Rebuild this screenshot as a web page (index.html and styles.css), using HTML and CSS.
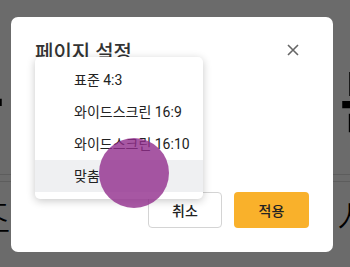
FILE: index.html
```html
<!DOCTYPE html>
<html lang="ko">

<head>
    <meta charset="UTF-8">
    <meta name="viewport" content="width=device-width, initial-scale=1.0">
    <title>페이지 설정</title>
    <link rel="stylesheet" href="styles.css">
</head>

<body>

    <div class="page">
        <div class="hero">
            <span class="hero-left">등</span>
            <span class="hero-right">문</span>
        </div>
        <div class="rule"></div>
        <div class="rule"></div>
        <div class="sub">
            <span class="sub-left">조</span>
            <span class="sub-right">사</span>
        </div>
    </div>

    <div class="overlay">
        <div class="modal">
            <div class="modal-header">
                <h2>페이지 설정</h2>
                <button class="close-btn" aria-label="닫기">
                    <svg width="12" height="12" viewBox="0 0 12 12">
                        <path d="M1 1 L11 11 M11 1 L1 11" stroke="#666" stroke-width="1.6" fill="none" />
                    </svg>
                </button>
            </div>

            <ul class="size-menu">
                <li>표준 4:3</li>
                <li>와이드스크린 16:9</li>
                <li>와이드스크린 16:10</li>
                <li class="active">맞춤</li>
            </ul>

            <div class="modal-footer">
                <button class="cancel-btn">취소</button>
                <button class="apply-btn">적용</button>
            </div>
        </div>
    </div>

    <div class="touch-dot"></div>

</body>

</html>
```

FILE: styles.css
```css
* {
    margin: 0;
    padding: 0;
    box-sizing: border-box;
}

body {
    font-family: Roboto, "Noto Sans CJK KR", sans-serif;
    width: 350px;
    height: 267px;
    overflow: hidden;
    background-color: #fff;
    color: #222;
}

/* page behind the dialog */
.page {
    padding-top: 64px;
    color: #000;
}

.hero {
    display: flex;
    justify-content: space-between;
    font-size: 68px;
    font-weight: 700;
    line-height: 80px;
    height: 104px;
}

.hero-left {
    margin-left: -58px;
}

.hero-right {
    margin-right: -52px;
}

.rule {
    height: 1px;
    background-color: #ddd;
    margin-top: 6px;
}

.sub {
    display: flex;
    justify-content: space-between;
    font-size: 40px;
    font-weight: 300;
    line-height: 48px;
    margin-top: 14px;
}

.sub-left {
    margin-left: -26px;
}

.sub-right {
    margin-right: -24px;
}

/* dialog */
.overlay {
    position: fixed;
    inset: 0;
    background-color: rgba(0, 0, 0, 0.58);
    padding: 17px 0 0 11px;
}

.modal {
    position: relative;
    width: 322px;
    height: 235px;
    background-color: #fff;
    border-radius: 7px;
    padding: 24px;
    display: flex;
    flex-direction: column;
}

.modal-header {
    display: flex;
    justify-content: space-between;
    align-items: flex-start;
}

.modal-header h2 {
    font-size: 20px;
    font-weight: 500;
    line-height: 24px;
    color: #333;
}

.close-btn {
    width: 24px;
    height: 24px;
    margin: -3px 4px 0 0;
    border: none;
    background: none;
    display: flex;
    align-items: center;
    justify-content: center;
}

.size-menu {
    position: absolute;
    left: 24px;
    top: 40px;
    width: 168px;
    list-style: none;
    background-color: #fff;
    border-radius: 5px;
    box-shadow: 0 2px 8px rgba(0, 0, 0, 0.22);
    padding: 7px 0;
}

.size-menu li {
    height: 32px;
    line-height: 32px;
    padding-left: 39px;
    font-size: 14px;
    color: #222;
}

.size-menu li.active {
    background-color: #eff0f2;
}

.modal-footer {
    margin-top: auto;
    display: flex;
    justify-content: flex-end;
    gap: 12px;
}

.cancel-btn,
.apply-btn {
    width: 74px;
    height: 36px;
    border-radius: 4px;
    font-family: inherit;
    font-size: 14px;
    font-weight: 500;
    color: #222;
}

.cancel-btn {
    background-color: #fff;
    border: 1px solid #d4d4d4;
}

.apply-btn {
    width: 75px;
    background-color: #f9b12b;
    border: none;
}

/* touch indicator */
.touch-dot {
    position: absolute;
    left: 99px;
    top: 138px;
    width: 70px;
    height: 70px;
    border-radius: 50%;
    background-color: rgba(145, 45, 140, 0.8);
}
```
